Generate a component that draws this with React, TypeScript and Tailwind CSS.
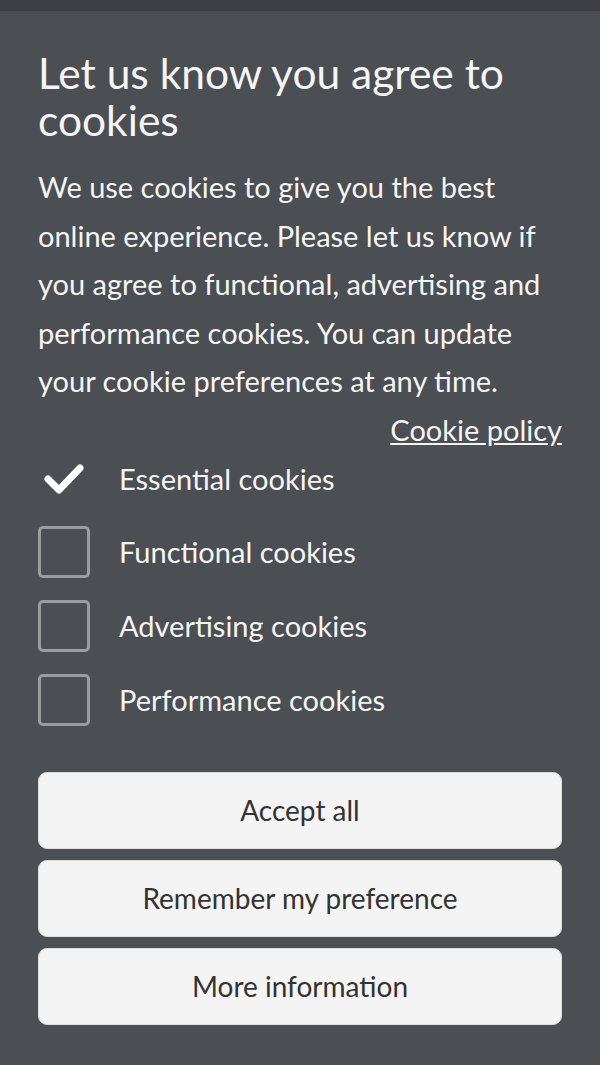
import React, { useState } from 'react';

const options = [
  { id: 'functional', label: 'Functional cookies' },
  { id: 'advertising', label: 'Advertising cookies' },
  { id: 'performance', label: 'Performance cookies' },
];

export default function App() {
  const [checked, setChecked] = useState<Record<string, boolean>>({});

  return (
    <div className="min-h-[1065px] bg-[#4b4e53] font-['Lato',sans-serif] text-[#f5f5f5]">
      <div className="h-[11px] bg-[#3d3f44]" />
      <div className="px-[38px] pt-[38px] pb-[38px]">
        <h1 className="text-[42.5px] leading-[47px] font-normal">Let us know you agree to cookies</h1>
        <p className="mt-[20px] text-[29px] leading-[48.5px]">
          We use cookies to give you the best online experience. Please let us know if you agree to
          functional, advertising and performance cookies. You can update your cookie preferences at
          any time.
        </p>
        <div className="flex justify-end">
          <a href="#" className="text-[29px] leading-[48px] underline underline-offset-2">
            Cookie policy
          </a>
        </div>

        <div className="flex flex-col">
          {/* Essential cookies are always on */}
          <div className="flex items-center h-[50px] mb-[22px]">
            <div className="w-[52px] flex justify-center">
              <svg width="42" height="32" viewBox="0 0 42 32" fill="none">
                <path d="M5 16 L16 27 L37 5" stroke="#ffffff" strokeWidth="7" strokeLinecap="round" strokeLinejoin="round" />
              </svg>
            </div>
            <span className="ml-[29px] text-[29px]">Essential cookies</span>
          </div>
          {options.map((o) => (
            <label key={o.id} className="flex items-center h-[52px] mb-[22px] cursor-pointer">
              <input
                type="checkbox"
                className="sr-only"
                checked={!!checked[o.id]}
                onChange={() => setChecked({ ...checked, [o.id]: !checked[o.id] })}
              />
              <span className="w-[52px] h-[52px] rounded-[5px] border-[3px] border-[#9b9c9e]" />
              <span className="ml-[29px] text-[29px]">{o.label}</span>
            </label>
          ))}
        </div>

        <div className="mt-[24px] flex flex-col gap-[11px]">
          {['Accept all', 'Remember my preference', 'More information'].map((t) => (
            <button
              key={t}
              className="h-[77px] w-full rounded-[9px] bg-[#f4f4f4] text-[#333333] text-[28px] border border-[#dddddd]"
            >
              {t}
            </button>
          ))}
        </div>
      </div>
    </div>
  );
}
